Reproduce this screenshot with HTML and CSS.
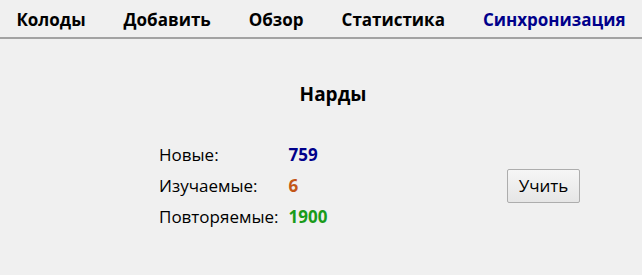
FILE: index.html
```html
<!DOCTYPE html>
<html lang="ru">
<head>
<meta charset="utf-8">
<link rel="stylesheet" href="styles.css">
</head>
<body>
<nav class="toolbar">
  <a class="tab">Колоды</a>
  <a class="tab">Добавить</a>
  <a class="tab">Обзор</a>
  <a class="tab">Статистика</a>
  <a class="tab sync">Синхронизация</a>
</nav>
<main class="overview">
  <h1 class="deck-title">Нарды</h1>
  <div class="study">
    <table class="counts">
      <tr><td class="label">Новые:</td><td class="num new">759</td></tr>
      <tr><td class="label">Изучаемые:</td><td class="num learn">6</td></tr>
      <tr><td class="label">Повторяемые:</td><td class="num review">1900</td></tr>
    </table>
    <button class="study-btn">Учить</button>
  </div>
</main>
</body>
</html>
```

FILE: styles.css
```css
html, body {
  margin: 0;
  padding: 0;
  background: #f0f0f0;
  font-family: "Open Sans", "Noto Sans", sans-serif;
  color: #000;
}
.toolbar {
  display: flex;
  justify-content: center;
  gap: 38px;
  height: 39px;
  padding-top: 2px;
  box-sizing: border-box;
  align-items: center;
  border-bottom: 2px solid #a3a3a3;
}
.tab {
  font-weight: bold;
  font-size: 17px;
  color: #000;
}
.tab.sync {
  color: #00008b;
}
.overview {
  display: flex;
  flex-direction: column;
  align-items: center;
}
.deck-title {
  font-size: 19px;
  font-weight: bold;
  margin: 42px 0 32px 24px;
}
.study {
  align-self: stretch;
  display: flex;
  align-items: center;
  justify-content: space-between;
  margin: 0 62px 0 159px;
}
.counts {
  border-collapse: collapse;
  font-size: 17px;
}
.counts td {
  padding: 0;
  height: 31px;
}
.label {
  padding-right: 10px !important;
}
.num {
  font-weight: bold;
  width: 60px;
}
.num.new { color: #00008b; }
.num.learn { color: #c35617; }
.num.review { color: #1a9b1a; }
.study-btn {
  font-family: "Open Sans", "Noto Sans", sans-serif;
  font-size: 17px;
  padding: 0 8px;
  height: 34px;
  width: 73px;
  border: 1px solid #adadad;
  border-radius: 2px;
  background: linear-gradient(#f6f6f6, #e6e6e6);
  color: #000;
}
```
